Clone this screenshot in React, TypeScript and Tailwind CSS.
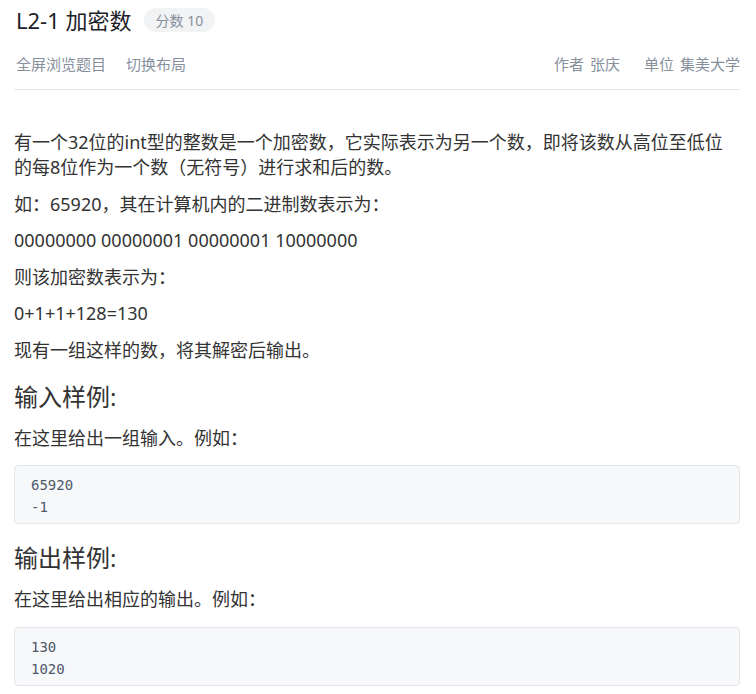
import React from "react";

const font = { fontFamily: '"Noto Sans", "Noto Sans CJK SC", sans-serif' };

function Code({ lines }: { lines: string[] }) {
  return (
    <pre className="rounded-[4px] border border-[#e5e6eb] bg-[#f7f8fa] pl-4 pt-2 pb-[5px] text-[14px] leading-[22px] text-[#4e5969] [font-family:'DejaVu_Sans_Mono',monospace]">
      {lines.join("\n")}
    </pre>
  );
}

export default function App() {
  const paras = [
    "有一个32位的int型的整数是一个加密数，它实际表示为另一个数，即将该数从高位至低位的每8位作为一个数（无符号）进行求和后的数。",
    "如：65920，其在计算机内的二进制数表示为：",
    "00000000 00000001 00000001 10000000",
    "则该加密数表示为：",
    "0+1+1+128=130",
    "现有一组这样的数，将其解密后输出。",
  ];
  return (
    <div className="min-h-[694px] bg-white pl-[14px] pr-4 pt-[5px]" style={font}>
      <div className="flex items-center gap-3">
        <h1 className="pl-[2px] text-[22px] leading-[30px] font-normal text-[#1d2129]">L2-1 加密数</h1>
        <span className="flex h-[24px] items-center rounded-full bg-[#f2f3f5] px-3 text-[14px] text-[#86909c]">
          分数 10
        </span>
      </div>
      <div className="mt-[18px] flex items-center justify-between border-b border-[#e5e6eb] pb-[14px] pl-[2px] text-[15px] leading-[22px] text-[#86909c]">
        <div className="flex gap-5">
          <span>全屏浏览题目</span>
          <span>切换布局</span>
        </div>
        <div className="flex gap-6">
          <span className="flex gap-[6px]">
            <span>作者</span>
            <span>张庆</span>
          </span>
          <span className="flex gap-[6px]">
            <span>单位</span>
            <span>集美大学</span>
          </span>
        </div>
      </div>
      <div className="pt-[40px] text-[18px] leading-[25px] text-[#333]">
        {paras.map((p, i) => (
          <p key={i} className="mb-[11.5px]">
            {p}
          </p>
        ))}
        <h2 className="mt-[18px] text-[24px] leading-[32px] font-normal">输入样例:</h2>
        <p className="mt-[13.5px] mb-[13.5px]">在这里给出一组输入。例如：</p>
        <Code lines={["65920", "-1"]} />
        <h2 className="mt-[18px] text-[24px] leading-[32px] font-normal">输出样例:</h2>
        <p className="mt-[13.5px] mb-[14.5px]">在这里给出相应的输出。例如：</p>
        <Code lines={["130", "1020"]} />
      </div>
    </div>
  );
}
